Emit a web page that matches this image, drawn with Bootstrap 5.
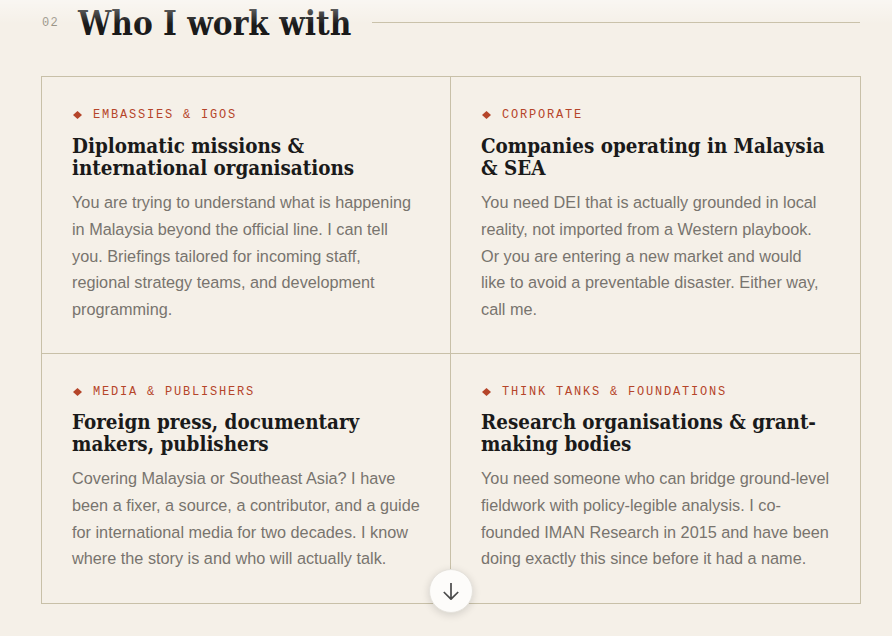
<!DOCTYPE html>
<html lang="en"><head><meta charset="utf-8"><title>Who I work with</title>
<link href="https://cdn.jsdelivr.net/npm/bootstrap@5.3.0/dist/css/bootstrap.min.css" rel="stylesheet">
<style>
html,body{height:100%}
body{background:#f5f0e8;font-family:"Liberation Sans",Arial,sans-serif;overflow:hidden;position:relative}
.fade-top{position:absolute;top:0;left:0;right:0;height:24px;background:linear-gradient(to bottom,rgba(255,255,255,.45),rgba(255,255,255,0));pointer-events:none}
.page-wrap{padding:0 32px 0 41px}
.sec-head{height:44px;gap:20px}
.sec-num{font-family:"Liberation Mono",monospace;font-size:12px;letter-spacing:.1em;color:#9a9588;width:17px;padding:2px 0 0 1px}
.sec-title{font-family:"DejaVu Serif Condensed","DejaVu Serif",serif;font-weight:700;font-size:33px;line-height:44px;color:#1a1a1a;margin:0;padding-top:2px;align-self:flex-start}
.sec-rule{height:1px;background:#c8c0a8;margin-left:1px}
.who-grid{display:grid;grid-template-columns:408px 410px;margin-top:32px;border:1px solid #c8c0a8;width:820px}
.who-cell{padding:31px 30px 0;height:276px}
.who-cell.low{height:250px}
.who-cell.r{border-left:1px solid #c8c0a8}
.who-cell.b{border-top:1px solid #c8c0a8}
.who-tag{font-family:"Liberation Mono",monospace;font-size:12px;letter-spacing:.15em;color:#b5452a;line-height:14px;margin-bottom:13px;gap:11px}
.who-cell.low .who-tag{margin-bottom:12px}
.who-tag svg{flex:none;margin-left:1px}
.who-h{font-family:"DejaVu Serif Condensed","DejaVu Serif",serif;font-weight:700;font-size:20.4px;line-height:22px;color:#1a1a1a;margin:0 0 10px}
.who-p{font-size:16.25px;line-height:26.8px;color:#78746e;margin:0}
.down-btn{position:absolute;left:429px;top:569px;width:44px;height:44px;border-radius:50%;background:#fdfcfa;border:1px solid #e6e3dd;box-shadow:0 2px 8px rgba(0,0,0,.14);padding:0}
</style></head><body>
<div class="fade-top"></div>
<div class="page-wrap">
<div class="sec-head d-flex align-items-center">
<span class="sec-num">02</span>
<h2 class="sec-title">Who I work with</h2>
<div class="sec-rule flex-grow-1"></div>
</div>
<div class="who-grid">
<div class="who-cell">
<div class="who-tag d-flex align-items-center"><svg width="9" height="8" viewBox="0 0 9 8"><path d="M4.5 0 9 4 4.5 8 0 4Z" fill="#b5452a"/></svg><span>EMBASSIES &amp; IGOS</span></div>
<h3 class="who-h">Diplomatic missions &amp; international organisations</h3>
<p class="who-p">You are trying to understand what is happening in Malaysia beyond the official line. I can tell you. Briefings tailored for incoming staff, regional strategy teams, and development programming.</p>
</div>
<div class="who-cell r">
<div class="who-tag d-flex align-items-center"><svg width="9" height="8" viewBox="0 0 9 8"><path d="M4.5 0 9 4 4.5 8 0 4Z" fill="#b5452a"/></svg><span>CORPORATE</span></div>
<h3 class="who-h">Companies operating in Malaysia &amp; SEA</h3>
<p class="who-p">You need DEI that is actually grounded in local reality, not imported from a Western playbook. Or you are entering a new market and would like to avoid a preventable disaster. Either way, call me.</p>
</div>
<div class="who-cell low b">
<div class="who-tag d-flex align-items-center"><svg width="9" height="8" viewBox="0 0 9 8"><path d="M4.5 0 9 4 4.5 8 0 4Z" fill="#b5452a"/></svg><span>MEDIA &amp; PUBLISHERS</span></div>
<h3 class="who-h">Foreign press, documentary makers, publishers</h3>
<p class="who-p">Covering Malaysia or Southeast Asia? I have been a fixer, a source, a contributor, and a guide for international media for two decades. I know where the story is and who will actually talk.</p>
</div>
<div class="who-cell low r b">
<div class="who-tag d-flex align-items-center"><svg width="9" height="8" viewBox="0 0 9 8"><path d="M4.5 0 9 4 4.5 8 0 4Z" fill="#b5452a"/></svg><span>THINK TANKS &amp; FOUNDATIONS</span></div>
<h3 class="who-h">Research organisations &amp; grant-making bodies</h3>
<p class="who-p">You need someone who can bridge ground-level fieldwork with policy-legible analysis. I co-founded IMAN Research in 2015 and have been doing exactly this since before it had a name.</p>
</div>
</div>
</div>
<button class="down-btn btn d-flex align-items-center justify-content-center" aria-label="Scroll down"><svg width="16" height="18" viewBox="0 0 16 18" fill="none"><path d="M8 1V17M.8 10 8 17.2 15.2 10" stroke="#4a4a4a" stroke-width="1.7"/></svg></button>
</body></html>
